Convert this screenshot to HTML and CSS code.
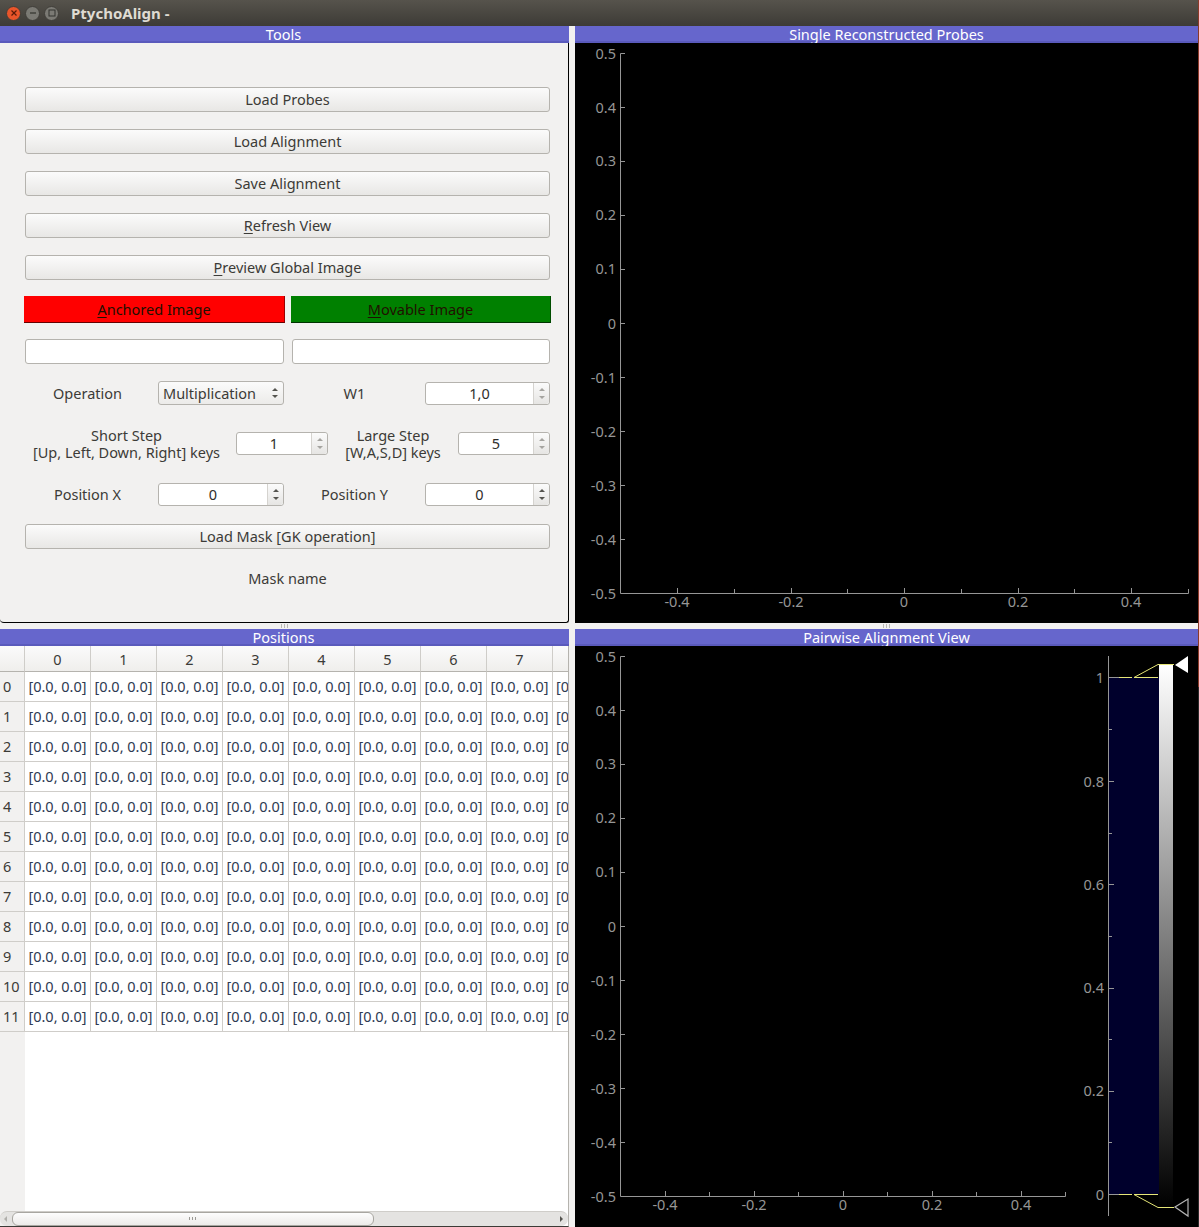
FILE: index.html
```html
<!doctype html>
<html>
<head>
	<title>PtychoAlign</title>
	<meta charset="utf-8">
	<link rel="stylesheet" href="styles.css">
</head>
<body>
	<div class="titlebar">
		<span class="winbtn winclose"><svg width="8" height="8" viewBox="0 0 8 8"><path d="M1.5 1.5 6.5 6.5M6.5 1.5 1.5 6.5" stroke="#5a1a08" stroke-width="1.2"/></svg></span>
		<span class="winbtn"><svg width="8" height="8" viewBox="0 0 8 8"><path d="M1 4H7" stroke="#33322e" stroke-width="1.2"/></svg></span>
		<span class="winbtn"><svg width="8" height="8" viewBox="0 0 8 8"><rect x="1" y="1" width="6" height="6" fill="none" stroke="#33322e"/></svg></span>
		<span class="wintitle">PtychoAlign -</span>
	</div>
	<div class="main">
		<section class="dock">
			<h2 class="docktitle">Tools</h2>
			<div class="tools">
				<button class="btn">Load Probes</button>
				<button class="btn">Load Alignment</button>
				<button class="btn">Save Alignment</button>
				<button class="btn"><u>R</u>efresh View</button>
				<button class="btn"><u>P</u>review Global Image</button>
				<div class="pair colored">
					<button class="flat red"><u>A</u>nchored Image</button>
					<button class="flat green"><u>M</u>ovable Image</button>
				</div>
				<div class="pair names">
					<div class="field"></div>
					<div class="field"></div>
				</div>
				<div class="row row-op">
					<span class="lbl w-a">Operation</span>
					<div class="combo">Multiplication<span class="updown"><i class="up"></i><i class="down"></i></span></div>
					<span class="lbl w-b">W1</span>
					<div class="spin w-c"><span class="val">1,0</span><span class="arrows"><i class="up dim"></i><i class="down dim"></i></span></div>
				</div>
				<div class="row row-step">
					<span class="lbl w-d">Short Step<br>[Up, Left, Down, Right] keys</span>
					<div class="spin w-e"><span class="val">1</span><span class="arrows"><i class="up dim"></i><i class="down dim"></i></span></div>
					<span class="lbl w-f">Large Step<br>[W,A,S,D] keys</span>
					<div class="spin w-e"><span class="val">5</span><span class="arrows"><i class="up dim"></i><i class="down dim"></i></span></div>
				</div>
				<div class="row row-pos">
					<span class="lbl w-a">Position X</span>
					<div class="spin w-g"><span class="val">0</span><span class="arrows"><i class="up"></i><i class="down"></i></span></div>
					<span class="lbl w-b">Position Y</span>
					<div class="spin w-c"><span class="val">0</span><span class="arrows"><i class="up"></i><i class="down"></i></span></div>
				</div>
				<button class="btn mask">Load Mask [GK operation]</button>
				<div class="maskname">Mask name</div>
			</div>
		</section>

		<section class="dock">
			<h2 class="docktitle">Single Reconstructed Probes</h2>
			<div class="plot">
				<svg class="plotsvg" width="623" height="581" viewBox="575 43 623 581">
					<g class="axis">
						<path d="M620.5 53.5V593.5H1188.5V589"/>
						<path d="M620.5 53.5H625M620.5 107.5H625M620.5 161.5H625M620.5 215.5H625M620.5 269.5H625M620.5 323.5H625M620.5 377.5H625M620.5 431.5H625M620.5 485.5H625M620.5 539.5H625"/>
						<path d="M677.5 593.5V588M734.5 593.5V589M791.5 593.5V588M847.5 593.5V589M904.5 593.5V588M961.5 593.5V589M1018.5 593.5V588M1074.5 593.5V589M1131.5 593.5V588"/>
					</g>
					<g class="ticks ylab">
						<text x="616" y="59">0.5</text><text x="616" y="113">0.4</text><text x="616" y="166">0.3</text><text x="616" y="220">0.2</text><text x="616" y="274">0.1</text><text x="616" y="329">0</text><text x="616" y="383">-0.1</text><text x="616" y="437">-0.2</text><text x="616" y="491">-0.3</text><text x="616" y="545">-0.4</text><text x="616" y="599">-0.5</text>
					</g>
					<g class="ticks xlab">
						<text x="677" y="607">-0.4</text><text x="791" y="607">-0.2</text><text x="904" y="607">0</text><text x="1018" y="607">0.2</text><text x="1131" y="607">0.4</text>
					</g>
				</svg>
			</div>
		</section>

		<section class="dock">
			<h2 class="docktitle">Positions</h2>
			<div class="tablewrap">
				<table class="grid" id="positions"></table>
				<div class="hscroll">
					<span class="sarrow left"></span>
					<div class="thumb"><span class="grip"></span></div>
					<span class="sarrow right"></span>
				</div>
			</div>
		</section>

		<section class="dock">
			<h2 class="docktitle">Pairwise Alignment View</h2>
			<div class="plot">
				<svg class="plotsvg" width="623" height="581" viewBox="575 646 623 581">
					<g class="axis">
						<path d="M620.5 656.5V1196.5H1065.5V1192"/>
						<path d="M620.5 656.5H625M620.5 710.5H625M620.5 764.5H625M620.5 818.5H625M620.5 872.5H625M620.5 926.5H625M620.5 980.5H625M620.5 1034.5H625M620.5 1088.5H625M620.5 1142.5H625"/>
						<path d="M665.5 1196.5V1191M709.5 1196.5V1192M754.5 1196.5V1191M798.5 1196.5V1192M843.5 1196.5V1191M887.5 1196.5V1192M932.5 1196.5V1191M976.5 1196.5V1192M1021.5 1196.5V1191"/>
					</g>
					<g class="ticks ylab">
						<text x="616" y="662">0.5</text><text x="616" y="716">0.4</text><text x="616" y="769">0.3</text><text x="616" y="823">0.2</text><text x="616" y="877">0.1</text><text x="616" y="932">0</text><text x="616" y="986">-0.1</text><text x="616" y="1040">-0.2</text><text x="616" y="1094">-0.3</text><text x="616" y="1148">-0.4</text><text x="616" y="1202">-0.5</text>
					</g>
					<g class="ticks xlab">
						<text x="665" y="1210">-0.4</text><text x="754" y="1210">-0.2</text><text x="843" y="1210">0</text><text x="932" y="1210">0.2</text><text x="1021" y="1210">0.4</text>
					</g>
					<defs>
						<linearGradient id="lut" x1="0" y1="0" x2="0" y2="1">
							<stop offset="0" stop-color="#fff"/>
							<stop offset="1" stop-color="#000"/>
						</linearGradient>
					</defs>
					<rect x="1109" y="677" width="50" height="517" fill="#00002c"/>
					<rect x="1159" y="665" width="14" height="542" fill="url(#lut)"/>
					<g class="axis">
						<path d="M1108.5 656V1216"/>
						<path d="M1108.5 677.5H1119M1108.5 729.5H1112M1108.5 781.5H1114M1108.5 833.5H1112M1108.5 884.5H1114M1108.5 936.5H1112M1108.5 988.5H1114M1108.5 1039.5H1112M1108.5 1091.5H1114M1108.5 1142.5H1112M1108.5 1194.5H1119"/>
					</g>
					<g class="ticks ylab">
						<text x="1104" y="683">1</text><text x="1104" y="787">0.8</text><text x="1104" y="890">0.6</text><text x="1104" y="993">0.4</text><text x="1104" y="1096">0.2</text><text x="1104" y="1200">0</text>
					</g>
					<g class="lutlines">
						<path d="M1119 677.5H1132"/><path d="M1134 677.5 1158 664.5H1174"/><path d="M1134 677.5H1158"/>
						<path d="M1119 1194.5H1132"/><path d="M1134 1194.5 1158 1207.5H1174"/><path d="M1134 1194.5H1158"/>
					</g>
					<path d="M1175 665 1188 656V673Z" fill="#fff"/>
					<path d="M1175 1207 1188 1199V1216Z" fill="none" stroke="#b5b5b5" stroke-width="1.2"/>
				</svg>
			</div>
		</section>
	</div>
	<span class="handle handle-a"></span>
	<span class="handle handle-b"></span>
	<span class="edge"></span>
	<script>
		// 12 rows, 8 full columns and the start of the next one at the dock edge
		var html = '<tr><th class="corner"></th>';
		for (var c = 0; c < 8; c++) {
			html += '<th>' + c + '</th>';
		}
		html += '<th class="cut"></th></tr>';
		for (var r = 0; r < 12; r++) {
			html += '<tr><th class="rowhead">' + r + '</th>';
			for (var c = 0; c < 8; c++) {
				html += '<td>[0.0, 0.0]</td>';
			}
			html += '<td class="cut">[0</td></tr>';
		}
		document.getElementById('positions').innerHTML = html;
	</script>
</body>
</html>
```

FILE: styles.css
```css
html, body {
	margin: 0;
	padding: 0;
}
body {
	position: relative;
	width: 1199px;
	height: 1227px;
	overflow: hidden;
	background: #f2f1f0;
	font-family: "Noto Sans", sans-serif;
	font-size: 14.5px;
	color: #3c3b37;
}
u {
	text-underline-offset: 2px;
}

/* window title */
.titlebar {
	display: flex;
	align-items: center;
	height: 26px;
	padding-left: 6px;
	gap: 4px;
	box-sizing: border-box;
	background: linear-gradient(#56534c, #3d3b36);
}
.winbtn {
	display: flex;
	align-items: center;
	justify-content: center;
	box-sizing: border-box;
	width: 15px;
	height: 15px;
	border-radius: 50%;
	background: #7b7a74;
	border: 1px solid #403e39;
}
.winclose {
	background: #e9552a;
}
.wintitle {
	margin-left: 8px;
	font-size: 15px;
	font-weight: 700;
	color: #dfdbd2;
}

.main {
	display: grid;
	grid-template-columns: 569px 623px;
	grid-template-rows: 597px 598px;
	column-gap: 6px;
	row-gap: 6px;
}
.dock {
	display: flex;
	flex-direction: column;
	min-width: 0;
	min-height: 0;
}
.docktitle {
	flex: none;
	height: 17px;
	margin: 0;
	box-shadow: inset 0 -2px 0 #5a5abc;
	background: #6666cc;
	color: #fff;
	font-size: 14.5px;
	font-weight: 400;
	line-height: 17px;
	text-align: center;
}
.dock:nth-child(odd) .docktitle {
	padding-right: 2px;
}

/* tools */
.tools {
	flex: 1;
	display: flex;
	flex-direction: column;
	padding: 44px 17px 0 25px;
	border-right: 1.5px solid #000;
	border-bottom: 1.5px solid #000;
	border-bottom-right-radius: 3px;
	border-bottom-left-radius: 4px;
}
.btn {
	flex: none;
	width: 525px;
	height: 25px;
	margin: 0 0 17px;
	padding: 0 0 2px;
	border: 1px solid #b5b3ae;
	border-radius: 3px;
	background: linear-gradient(#fbfbfb, #e8e7e5);
	font: inherit;
	color: #3c3b37;
}
.pair {
	display: flex;
	flex: none;
}
.colored {
	margin: -1px 0 0 -1px;
	gap: 6px;
}
.flat {
	flex: none;
	height: 27px;
	padding: 0;
	border: 0;
	border-right: 1px solid rgba(0, 0, 0, .4);
	border-bottom: 1px solid rgba(0, 0, 0, .6);
	font: inherit;
	color: #201000;
}
.red {
	width: 261px;
	background: #f00;
}
.green {
	width: 260px;
	background: #008000;
}
.names {
	margin-top: 16px;
	gap: 8px;
}
.field {
	flex: none;
	box-sizing: border-box;
	width: 259px;
	height: 25px;
	background: #fff;
	border: 1px solid #b5b3ae;
	border-radius: 3px;
}
.field + .field {
	width: 258px;
}
.row {
	display: flex;
	align-items: center;
	flex: none;
}
.row-op {
	margin-top: 17px;
	height: 24px;
}
.row-step {
	margin-top: 26px;
	height: 24px;
}
.row-pos {
	margin-top: 27px;
	height: 24px;
}
.lbl {
	flex: none;
	text-align: center;
	line-height: 17px;
}
.row-step .lbl {
	padding-top: 2px;
}
.w-a {
	width: 125px;
	margin-right: 8px;
}
.w-b {
	width: 125px;
	margin: 0 8px;
}
.w-c {
	flex: none;
	width: 125px;
}
.w-d {
	width: 203px;
	margin-right: 8px;
	white-space: nowrap;
}
.w-e {
	flex: none;
	width: 92px;
}
.w-f {
	width: 114px;
	margin: 0 8px;
	white-space: nowrap;
}
.w-g {
	flex: none;
	width: 126px;
}
.combo {
	position: relative;
	flex: none;
	box-sizing: border-box;
	width: 126px;
	height: 24px;
	padding-left: 4px;
	border: 1px solid #b5b3ae;
	border-radius: 3px;
	background: linear-gradient(#fbfbfb, #ecebe9);
	line-height: 23px;
}
.updown {
	position: absolute;
	right: 5px;
	top: 6px;
	display: flex;
	flex-direction: column;
	gap: 4px;
}
.spin {
	display: flex;
	box-sizing: border-box;
	height: 23px;
	border: 1px solid #b5b3ae;
	border-radius: 3px;
	background: #fff;
}
.val {
	flex: 1;
	text-align: center;
	line-height: 21px;
	color: #2e2d2a;
}
.arrows {
	display: flex;
	flex-direction: column;
	align-items: center;
	justify-content: center;
	gap: 5px;
	flex: none;
	width: 15px;
	border-left: 1px solid #d5d3cf;
	background: linear-gradient(#fbfbfb, #e6e5e3);
	border-radius: 0 3px 3px 0;
}
.up, .down {
	display: block;
	width: 0;
	height: 0;
	border-left: 3px solid transparent;
	border-right: 3px solid transparent;
}
.up {
	border-bottom: 3px solid #55544f;
}
.down {
	border-top: 3px solid #55544f;
}
.up.dim {
	border-bottom-color: #a5a4a0;
}
.down.dim {
	border-top-color: #a5a4a0;
}
.mask {
	margin: 18px 0 0;
}
.maskname {
	width: 525px;
	margin-top: 21px;
	line-height: 17px;
	text-align: center;
}

/* table */
.tablewrap {
	position: relative;
	flex: 1;
	overflow: hidden;
	background: #fff;
	box-sizing: border-box;
	border-right: 1px solid #b5b3ae;
	border-bottom: 1px solid #3c3b37;
}
.grid {
	border-collapse: separate;
	border-spacing: 0;
	table-layout: fixed;
	width: 568px;
}
.grid th {
	box-sizing: border-box;
	width: 66px;
	height: 26px;
	padding: 1px 0 0;
	font-weight: 400;
	background: linear-gradient(#fbfbfb, #efeeec);
	border-right: 1px solid #cfcdc9;
	border-bottom: 1px solid #b5b3ae;
	text-align: center;
}
.grid th.corner, .grid th.rowhead {
	width: 25px;
}
.grid th.cut {
	width: 15px;
	border-right: 0;
}
.grid th.rowhead {
	height: 30px;
	padding: 0 0 2px;
	text-align: left;
	text-indent: 3px;
	background: #f2f1f0;
	border-bottom: 1px solid #cfcdc9;
	border-right: 1px solid #cfcdc9;
}
.grid td {
	box-sizing: border-box;
	height: 30px;
	padding: 0 0 2px;
	text-align: center;
	white-space: nowrap;
	overflow: hidden;
	color: #2e3a52;
	border-right: 1px solid #cfcdc9;
	border-bottom: 1px solid #cfcdc9;
}
.grid td.cut {
	padding-left: 3px;
	text-align: left;
	border-right: 0;
}
.tablewrap::before {
	content: "";
	position: absolute;
	left: 0;
	top: 386px;
	bottom: 0;
	width: 25px;
	background: #f2f1f0;
}
.hscroll {
	position: absolute;
	left: 0;
	right: 0;
	bottom: 0;
	height: 14px;
	background: #e4e3e1;
	border-top: 1px solid #cfcdc9;
	border-radius: 7px;
}
.thumb {
	position: absolute;
	left: 12px;
	top: 0;
	width: 360px;
	height: 12px;
	background: linear-gradient(#fdfdfd, #ecebe9);
	border: 1px solid #a8a6a1;
	border-radius: 6px;
}
.grip {
	position: absolute;
	left: 176px;
	top: 4px;
	width: 7px;
	height: 3px;
	background: repeating-linear-gradient(90deg, #9a9994 0 1px, transparent 1px 3px);
}
.sarrow {
	position: absolute;
	top: 4px;
	width: 0;
	height: 0;
	border-top: 3px solid transparent;
	border-bottom: 3px solid transparent;
}
.sarrow.left {
	left: 4px;
	border-right: 3px solid #b0afab;
}
.sarrow.right {
	right: 5px;
	border-left: 3px solid #55544f;
}

/* plots */
.plot {
	flex: 1;
	background: #000;
	overflow: hidden;
}
.plotsvg {
	display: block;
}
.axis path {
	fill: none;
	stroke: #969696;
	stroke-width: 1;
}
.ticks text {
	font-family: "Noto Sans", sans-serif;
	font-size: 14.5px;
	fill: #969696;
}
.ylab text {
	text-anchor: end;
}
.xlab text {
	text-anchor: middle;
}
.lutlines path {
	fill: none;
	stroke: #e6e678;
	stroke-width: 1;
}

/* small things over the layout */
.handle {
	position: absolute;
	top: 624px;
	width: 7px;
	height: 4px;
	background: repeating-linear-gradient(90deg, #b9b8b4 0 1px, transparent 1px 3px);
}
.handle-a {
	left: 281px;
}
.handle-b {
	left: 883px;
}
.edge {
	position: absolute;
	top: 0;
	right: 0;
	width: 1px;
	height: 100%;
	background: linear-gradient(#8a3a28 0 56%, #2a2a2a 56%);
}
```
